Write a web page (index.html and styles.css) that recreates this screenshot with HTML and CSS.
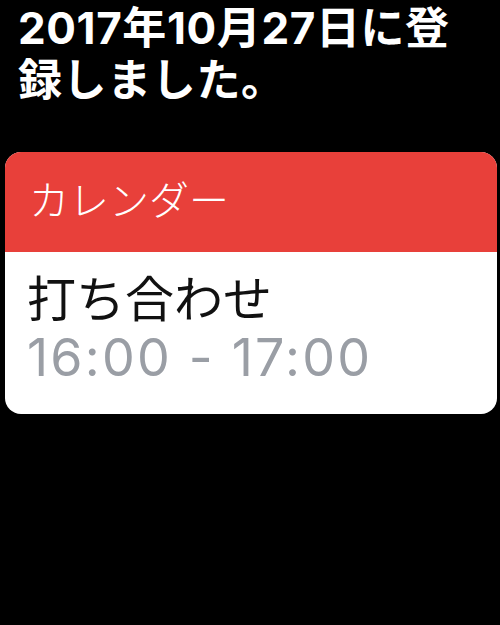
FILE: index.html
```html
<!DOCTYPE html>
<html lang="ja">
<head>
<meta charset="utf-8">
<link rel="stylesheet" href="styles.css">
</head>
<body>
<div class="screen">
  <p class="message">2017年10月27日に登録しました。</p>
  <div class="card">
    <div class="card-header">カレンダー</div>
    <div class="card-body">
      <div class="title">打ち合わせ</div>
      <div class="time">16:00 - 17:00</div>
    </div>
  </div>
</div>
</body>
</html>
```
FILE: styles.css
```css
html, body {
  margin: 0;
  padding: 0;
  background: #000;
}
.screen {
  width: 500px;
  height: 625px;
  background: #000;
  font-family: "Inter", "Noto Sans CJK JP", sans-serif;
  padding: 0 3px 0 5px;
  box-sizing: border-box;
  overflow: hidden;
}
.message {
  margin: 0;
  padding: 2px 0 0 13px;
  color: #fff;
  font-size: 44px;
  font-weight: 700;
  line-height: 52px;
  letter-spacing: 0.6px;
  width: 450px;
}
.card {
  margin-top: 46px;
  border-radius: 16px;
  overflow: hidden;
  background: #fff;
}
.card-header {
  background: #e8403a;
  color: #fff;
  height: 100px;
  box-sizing: border-box;
  padding: 20px 0 0 24px;
  font-family: "Noto Sans CJK JP", sans-serif;
  font-size: 40px;
  font-weight: 300;
  line-height: 52px;
}
.card-body {
  padding: 14px 0 24px 22px;
}
.title {
  color: #111;
  font-family: "Noto Sans CJK JP", sans-serif;
  font-size: 49px;
  line-height: 60px;
  font-weight: 400;
}
.time {
  color: #9a9ea5;
  font-size: 52px;
  line-height: 64px;
  font-weight: 400;
  letter-spacing: 2.2px;
}
```
